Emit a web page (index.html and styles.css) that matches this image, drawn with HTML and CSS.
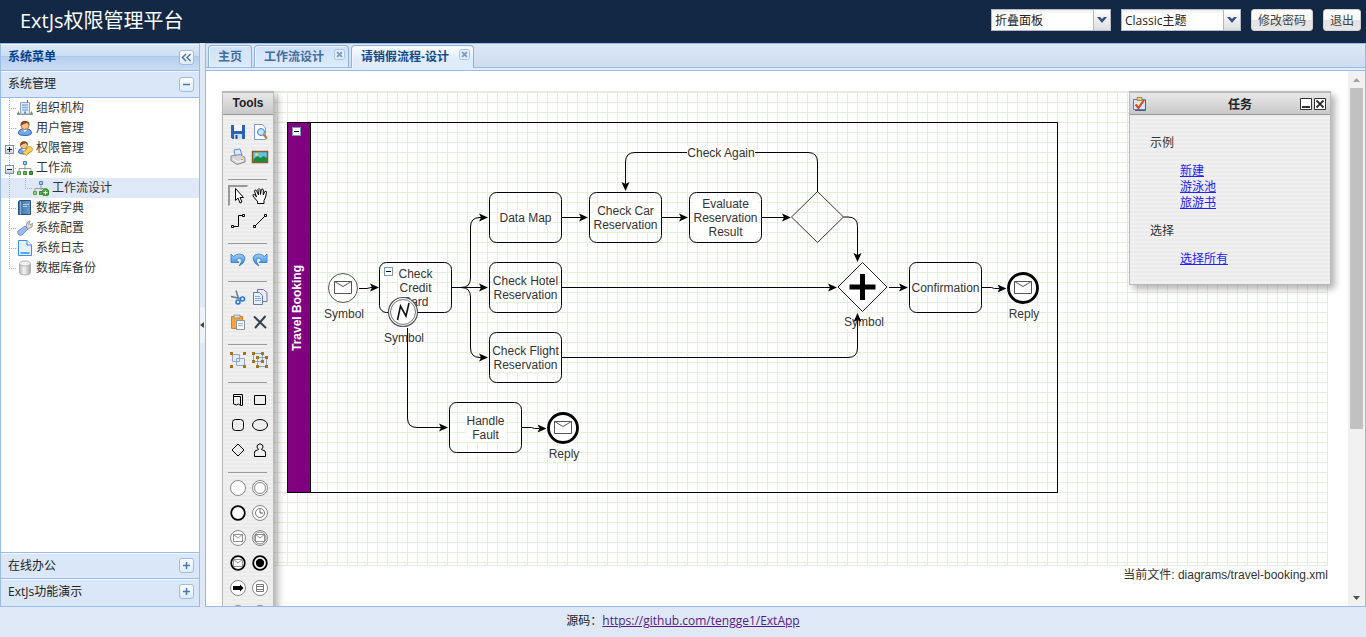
FILE: index.html
```html
<!DOCTYPE html>
<html lang="zh-CN">
<head>
<meta charset="utf-8">
<title>ExtJs权限管理平台</title>
<link rel="stylesheet" href="styles.css">
</head>
<body>
<svg class="defs" aria-hidden="true">
  <defs>
    <linearGradient id="gBlue" x1="0" y1="0" x2="0" y2="1"><stop offset="0" stop-color="#9fd0fb"/><stop offset="1" stop-color="#2f7fd6"/></linearGradient>
    <linearGradient id="gBook" x1="0" y1="0" x2="1" y2="0"><stop offset="0" stop-color="#3f70a4"/><stop offset="1" stop-color="#6c9cc8"/></linearGradient>
    <linearGradient id="gGrey" x1="0" y1="0" x2="1" y2="0"><stop offset="0" stop-color="#b5b5b5"/><stop offset=".4" stop-color="#f6f6f6"/><stop offset="1" stop-color="#a8a8a8"/></linearGradient>
    <symbol id="person" viewBox="0 0 16 16">
      <path d="M1.500 13.500Q1.500 9 6 9h4q4.500 0 4.500 4.500-1 2-6.500 2t-6.500-2z" fill="#6fa8ee" stroke="#2f62b5"/>
      <path d="M5.500 9.500L8 12l2.500-2.500" fill="#fff"/>
      <circle cx="8" cy="5.500" r="4" fill="#f5c08a" stroke="#a8682f" stroke-width=".8"/>
      <path d="M3.500 6Q3 1 8 .8q5 .2 4.500 5-1-2.600-3-2.800Q6 4 3.500 6z" fill="#8a4a1c"/>
    </symbol>
    <symbol id="chart" viewBox="0 0 16 16">
      <path d="M8 5v5M2 11V8.500h12V11" fill="none" stroke="#999"/>
      <path d="M6.500 1.500h3v3h-3z" fill="#a9cbf5" stroke="#4b80c8"/>
      <path d="M.5 11.500h3v3h-3z" fill="#8fd07a" stroke="#5da34e"/>
      <path d="M6.500 11.500h3v3h-3z" fill="#5fbf4c" stroke="#3b8d30"/>
      <path d="M12.500 11.500h3v3h-3z" fill="#3fa133" stroke="#2a7424"/>
    </symbol>
    <symbol id="mail" viewBox="0 0 20 20">
      <path d="M5.500 6.500h9v7h-9zM5.500 6.500L10 10l4.500-3.500" fill="none" stroke="#777" stroke-width=".8"/>
    </symbol>
    <symbol id="envelope" viewBox="0 0 18 13">
      <path d="M.5.5h17v12H.5zM.5.5L9 5.500 17.500.5" fill="none" stroke="#555"/>
    </symbol>
  </defs>
</svg>

<div class="app">
  <header class="top">
    <h1 class="brand">ExtJs权限管理平台</h1>
    <div class="combo">
      <select class="combo-box" aria-label="菜单样式"><option>折叠面板</option></select>
      <span class="combo-trigger"><svg width="10" height="6" viewBox="0 0 10 6"><path d="M0 0h3l2 2 2-2h3L5 6z" fill="#334f87"/></svg></span>
    </div>
    <div class="combo">
      <select class="combo-box" aria-label="主题"><option>Classic主题</option></select>
      <span class="combo-trigger"><svg width="10" height="6" viewBox="0 0 10 6"><path d="M0 0h3l2 2 2-2h3L5 6z" fill="#334f87"/></svg></span>
    </div>
    <button class="btn" type="button">修改密码</button>
    <button class="btn" type="button">退出</button>
  </header>

  <div class="body">
    <aside class="side">
      <div class="side-title">
        <span>系统菜单</span>
        <button class="tool" type="button" aria-label="收起"><svg width="13" height="13" viewBox="0 0 13 13"><path d="M6 3L2.500 6.500 6 10M10.500 3L7 6.500l3.500 3.500" fill="none" stroke="#4878b8" stroke-width="1.500"/></svg></button>
      </div>
      <div class="acc">
        <span>系统管理</span>
        <button class="tool" type="button" aria-label="折叠"><svg width="13" height="13" viewBox="0 0 13 13"><path d="M3 6.500h7" stroke="#4878b8" stroke-width="1.500"/></svg></button>
      </div>
      <ul class="tree">
        <li class="node"><i class="elbow"></i><svg class="ico" viewBox="0 0 16 16"><path d="M0 14.500h16" stroke="#8a8f98"/><path d="M3.500 2.500h9V14h-9z" fill="#dfe9f8" stroke="#98a5bb"/><path d="M5 5h6M5 7.500h6M5 10h6" stroke="#86aee6" stroke-width="1.500"/><path d="M7 11.500h2V14H7z" fill="#7f93b5"/><path d="M10.500 2.500V0" stroke="#e0403a"/><path d="M0 14l1.500-3L3 14zM13 14l1.500-3L16 14z" fill="#4aa94a"/></svg><span>组织机构</span></li>
        <li class="node"><i class="elbow"></i><svg class="ico"><use href="#person"/></svg><span>用户管理</span></li>
        <li class="node"><i class="elbow"><b class="pm plus"></b></i><svg class="ico" viewBox="0 0 16 16"><use href="#person" width="14" height="15"/><path d="M5.500 12.500l4-3 1-2.500 3-.5 2 2-.5 3-3 1-2.500 3z" fill="#fbd35c" stroke="#c98a1c" stroke-width=".8"/></svg><span>权限管理</span></li>
        <li class="node"><i class="elbow"><b class="pm"></b></i><svg class="ico"><use href="#chart"/></svg><span>工作流</span></li>
        <li class="node selected"><i class="elbow through"></i><i class="elbow end"></i><svg class="ico" viewBox="0 0 16 16"><use href="#chart"/><circle cx="12.500" cy="12.500" r="3.500" fill="#4fae3e" stroke="#2b7a22" stroke-width=".8"/><path d="M10.500 12.500h4M12.500 10.500v4" stroke="#fff"/></svg><span>工作流设计</span></li>
        <li class="node"><i class="elbow"></i><svg class="ico" viewBox="0 0 16 16"><path d="M1.500 1.500l1.500-1h10.500v14h-12z" fill="url(#gBook)" stroke="#24507e"/><path d="M3.500 1.500v13" stroke="#8fb4da"/><path d="M6 4.500h6M6 6.500h4" stroke="#b8d2ea"/></svg><span>数据字典</span></li>
        <li class="node"><i class="elbow"></i><svg class="ico" viewBox="0 0 16 16"><path d="M9 7L10 2.500 13 .8 12 4l2 .8L15.500 3 15 7l-3.500 1.500L10.500 10z" fill="#d8d8d8" stroke="#888" stroke-width=".8"/><path d="M8 6l3 3-6 6q-2 1-3.500-.5T1 11z" fill="#9cbcf0" stroke="#5a7fc0" stroke-width=".8"/></svg><span>系统配置</span></li>
        <li class="node"><i class="elbow"></i><svg class="ico" viewBox="0 0 16 16"><path d="M1.500.5H10L14.500 5v10.500h-13z" fill="#e3f1ff" stroke="#3f8ee0"/><path d="M10 .5V5h4.500" fill="#fff" stroke="#3f8ee0"/><path d="M3.500 13h9" stroke="#58a6ef" stroke-width="2"/></svg><span>系统日志</span></li>
        <li class="node"><i class="elbow end"></i><svg class="ico" viewBox="0 0 16 16"><path d="M2.500 3.500V13q1 2 5.500 2t5.500-2V3.500z" fill="url(#gGrey)" stroke="#b0b0b0"/><ellipse cx="8" cy="3.500" rx="5.500" ry="2.500" fill="#f2f2f2" stroke="#b4b4b4"/></svg><span>数据库备份</span></li>
      </ul>
      <div class="acc acc-low">
        <span>在线办公</span>
        <button class="tool" type="button" aria-label="展开"><svg width="13" height="13" viewBox="0 0 13 13"><path d="M3 6.500h7M6.500 3v7" stroke="#4878b8" stroke-width="1.500"/></svg></button>
      </div>
      <div class="acc acc-low acc-last">
        <span>ExtJs功能演示</span>
        <button class="tool" type="button" aria-label="展开"><svg width="13" height="13" viewBox="0 0 13 13"><path d="M3 6.500h7M6.500 3v7" stroke="#4878b8" stroke-width="1.500"/></svg></button>
      </div>
    </aside>

    <div class="splitter"><span class="grip"><svg width="4" height="6" viewBox="0 0 4 6"><path d="M4 0v6L0 3z" fill="#444"/></svg></span></div>

    <main class="main">
      <nav class="tabs">
        <button class="tab" type="button">主页</button>
        <button class="tab closable" type="button">工作流设计<svg class="close" viewBox="0 0 11 11"><rect x=".5" y=".5" width="10" height="10" rx="2" fill="#e6effb" stroke="#a9c4e8"/><path d="M3 3l5 5M8 3L3 8" stroke="#7f9fc9" stroke-width="1.800"/></svg></button>
        <button class="tab closable active" type="button">请销假流程-设计<svg class="close" viewBox="0 0 11 11"><rect x=".5" y=".5" width="10" height="10" rx="2" fill="#e6effb" stroke="#a9c4e8"/><path d="M3 3l5 5M8 3L3 8" stroke="#7f9fc9" stroke-width="1.800"/></svg></button>
      </nav>
      <div class="view">
        <div class="editor">
          <div class="stage">
            <div class="tag">Travel Booking</div>
            <div class="task data-map"><span>Data Map</span></div>
            <div class="task car"><span>Check Car<br>Reservation</span></div>
            <div class="task evaluate"><span>Evaluate<br>Reservation<br>Result</span></div>
            <div class="task credit"><span>Check<br>Credit<br>Card</span></div>
            <div class="task hotel"><span>Check Hotel<br>Reservation</span></div>
            <div class="task flight"><span>Check Flight<br>Reservation</span></div>
            <div class="task handle"><span>Handle<br>Fault</span></div>
            <div class="task confirm"><span>Confirmation</span></div>
            <div class="caption cap-start"><span>Symbol</span></div>
            <div class="caption cap-error"><span>Symbol</span></div>
            <div class="caption cap-join"><span>Symbol</span></div>
            <div class="caption cap-reply"><span>Reply</span></div>
            <div class="caption cap-fault"><span>Reply</span></div>

            <svg class="wires" width="1106" height="475" viewBox="222 91 1106 475">
              <defs>
                <marker id="arr" markerUnits="userSpaceOnUse" markerWidth="9" markerHeight="9" refX="2" refY="4.500" orient="auto"><path d="M0 .5L9 4.500 0 8.500 2 4.500z"/></marker>
              </defs>
              <g fill="none" stroke="#000">
                <rect x="287.500" y="122.500" width="770" height="370"/>
                <path d="M310.500 122.500v370"/>
                <rect x="489.500" y="192.500" width="72" height="50" rx="7"/>
                <rect x="589.500" y="192.500" width="72" height="50" rx="7"/>
                <rect x="689.500" y="192.500" width="72" height="50" rx="7"/>
                <rect x="379.500" y="262.500" width="72" height="50" rx="7"/>
                <rect x="489.500" y="262.500" width="72" height="50" rx="7"/>
                <rect x="489.500" y="332.500" width="72" height="50" rx="7"/>
                <rect x="449.500" y="402.500" width="72" height="50" rx="7"/>
                <rect x="909.500" y="262.500" width="72" height="50" rx="7"/>
                <path d="M817.500 191.500l26 25.500-26 25.500-26-25.500z" stroke-width=".8"/>
              </g>
              <path d="M862.500 262.500l24.500 24.500-24.500 24.500-24.500-24.500z" fill="#fff" stroke="#222"/>
              <path d="M862.500 274v26M849.500 287h26" stroke="#000" stroke-width="5"/>
              <circle cx="343" cy="288" r="14.500" fill="#fff" stroke="#555"/>
              <use href="#envelope" x="334" y="281" width="18" height="13"/>
              <circle cx="403" cy="312" r="14.500" fill="#fff" stroke="#555" stroke-width="1.200"/>
              <circle cx="403" cy="312" r="12.500" fill="none" stroke="#777"/>
              <path d="M397.500 320l3-14 5.500 10 3-13" fill="none" stroke="#111" stroke-width="1.600"/>
              <circle cx="1023" cy="288" r="14.500" fill="#fff" stroke="#000" stroke-width="2.800"/>
              <use href="#envelope" x="1014" y="281" width="18" height="13"/>
              <circle cx="563" cy="428" r="14.500" fill="#fff" stroke="#000" stroke-width="2.800"/>
              <use href="#envelope" x="554" y="421" width="18" height="13"/>
              <g class="edges" fill="none" stroke="#000">
                <path d="M359 288.500h8l4-1h1"/>
                <path d="M451.500 287.500H481"/>
                <path d="M451.500 287.500H461q9.500 0 9.500-9.500v-51q0-9.500 9.500-9.500h1"/>
                <path d="M451.500 287.500H461q9.500 0 9.500 9.500v51q0 9.500 9.500 9.500h1"/>
                <path d="M561.500 217.500H581"/>
                <path d="M661.500 217.500H681"/>
                <path d="M761.500 217.500H784"/>
                <path d="M817.500 192v-30q0-9.500-9.500-9.500H635q-9.500 0-9.500 9.500v22"/>
                <path d="M843.500 217H848q9.500 0 9.500 9.500V255"/>
                <path d="M561.500 287.500H830"/>
                <path d="M561.500 357.500H848q9.500 0 9.500-9.500V320"/>
                <path d="M889 287.500H901"/>
                <path d="M981.500 287.500h10l3 1h5"/>
                <path d="M407.500 328v90q0 9.500 9.500 9.500h24"/>
                <path d="M521.500 427.500h10l3 1h5"/>
              </g>
              <g fill="#fff" stroke="#7b97b8">
                <rect x="292.500" y="127.500" width="8" height="8"/>
                <rect x="384.500" y="267.500" width="8" height="8"/>
                <path d="M294 131.500h5M386 271.500h5" stroke="#000"/>
              </g>
            </svg>
            <div class="caption cap-again"><span>Check Again</span></div>

            <section class="win tools">
              <h2 class="win-title">Tools</h2>
              <div class="win-body">
                <div class="group">
                  <button type="button" aria-label="保存"><svg viewBox="0 0 20 20"><path d="M3 3h14v14H4.500L3 15.500z" fill="#2b62b8"/><path d="M6 3h8v6H6z" fill="#f4f8ff"/><path d="M6 12h8v5H6z" fill="#cfe0f5"/><path d="M7.500 13h2v4h-2z" fill="#234f95"/></svg></button>
                  <button type="button" aria-label="预览"><svg viewBox="0 0 20 20"><path d="M4.500 2.500h8L15.500 6v11.500h-11z" fill="#fff" stroke="#7e9ccb"/><circle cx="11" cy="10" r="3.500" fill="#bfe3fa" stroke="#4b86bd"/><path d="M13.500 12.500l3.500 4" stroke="#c07b35" stroke-width="2"/></svg></button>
                  <button type="button" aria-label="打印"><svg viewBox="0 0 20 20"><path d="M6 3l6-1 2 6-7 1z" fill="#dceaff" stroke="#5d8fd0"/><path d="M3 9l9-1.500 5 3V15l-8 2.500-6-4z" fill="#d5d5d8" stroke="#8b8b90"/><path d="M5 12l5 3 5-1.500" fill="none" stroke="#fff"/><path d="M13 12.500h2" stroke="#e0a030"/></svg></button>
                  <button type="button" aria-label="导出图片"><svg viewBox="0 0 20 20"><path d="M2.500 4.500h15v11h-15z" fill="#5dc3e8" stroke="#8a5a2b" stroke-width="1.500"/><path d="M3.500 15v-3l4-3 3 2 3-2 3.500 2v4z" fill="#218838"/><circle cx="6.500" cy="7.500" r="1.500" fill="#ffd94a"/></svg></button>
                </div>
                <div class="group modes">
                  <button type="button" class="pressed" aria-label="选择"><svg viewBox="0 0 20 20"><path d="M6.500 2.500v12l2.500-2.500 2 5 2-1-2-4.500h3.500z" fill="#fff" stroke="#000"/></svg></button>
                  <button type="button" aria-label="平移"><svg viewBox="0 0 20 20"><path d="M7.500 17.500v-2L3 10Q2.500 8 4.500 8.500L6.500 11 4.500 5q.5-2 2-.5l2 4.500-.5-5.500q1-2 2 0l.5 5 .8-5q1.500-1.500 2 .5v5l1.500-3.500q1.800-1 1.700 1-.5 5-2.500 8v3z" fill="#fff" stroke="#000"/></svg></button>
                  <button type="button" aria-label="折线"><svg viewBox="0 0 20 20"><path d="M5 15.500h5.500v-11H15" fill="none" stroke="#000"/><path d="M3.500 14.500h2v2h-2zM14.500 3.500h2v2h-2z" fill="#fff" stroke="#000"/></svg></button>
                  <button type="button" aria-label="直线"><svg viewBox="0 0 20 20"><path d="M5 15L15 5" stroke="#000"/><path d="M3.500 14.500h2v2h-2zM14.500 3.500h2v2h-2z" fill="#fff" stroke="#000"/></svg></button>
                </div>
                <div class="group">
                  <button type="button" aria-label="撤销"><svg viewBox="0 0 20 20"><path d="M3 5v8.500h8L8.500 11q2.500-3 4.500-1.500 2 3-2 7.500 6-3 6-8-1-4-5.500-4Q8 5 5.500 7.500z" fill="url(#gBlue)" stroke="#2b78c8" stroke-width=".8"/></svg></button>
                  <button type="button" aria-label="重做"><svg viewBox="0 0 20 20"><path d="M17 5v8.500H9l2.500-2.500Q9 8 7 9.500q-2 3 2 7.500-6-3-6-8 1-4 5.500-4Q12 5 14.500 7.500z" fill="url(#gBlue)" stroke="#2b78c8" stroke-width=".8"/></svg></button>
                </div>
                <div class="group">
                  <button type="button" aria-label="剪切"><svg viewBox="0 0 20 20"><path d="M8 3.500l2.500 8M3 9.500l9 2" stroke="#66798f" stroke-width="1.500"/><circle cx="14.500" cy="12" r="2" fill="none" stroke="#2b74d0" stroke-width="1.500"/><circle cx="10" cy="15" r="2" fill="none" stroke="#2b74d0" stroke-width="1.500"/></svg></button>
                  <button type="button" aria-label="复制"><svg viewBox="0 0 20 20"><path d="M7.500 2.500h6l3.500 3v9H7.500z" fill="#efeafa" stroke="#7a6db0"/><path d="M3.500 5.500h6l3 3v9h-9z" fill="#e4f0ff" stroke="#6478b0"/><path d="M5 9.500h5M5 11.500h6M5 13.500h6" stroke="#8aa8d8"/></svg></button>
                  <button type="button" aria-label="粘贴"><svg viewBox="0 0 20 20"><path d="M3.500 4.500h11v12h-11z" fill="#f7a53b" stroke="#d9801c"/><path d="M6 3h6v3H6z" fill="#ddd" stroke="#888" stroke-width=".8"/><path d="M8.500 8.500h8v9h-8z" fill="#f5f7fa" stroke="#8b95a5"/><path d="M10 11.500h5M10 13.500h5" stroke="#b0b8c8"/></svg></button>
                  <button type="button" aria-label="删除"><svg viewBox="0 0 20 20"><path d="M4 4.500l12 11.500M15.500 4L5 16" stroke="#39424e" stroke-width="2"/></svg></button>
                </div>
                <div class="group">
                  <button type="button" aria-label="组合"><svg viewBox="0 0 20 20"><path d="M4.500 4.500h7v7h-7zM8.500 8.500h8v7h-8z" fill="#e3ecf8" stroke="#91a6c4"/><path d="M2 2h3v3H2zM15 2h3v3h-3zM2 15h3v3H2zM15 15h3v3h-3z" fill="#a5731a"/></svg></button>
                  <button type="button" aria-label="取消组合"><svg viewBox="0 0 20 20"><path d="M3.500 3.500h9v8h-9zM7.500 7.500h9v9h-9z" fill="#e3ecf8" stroke="#91a6c4"/><path d="M2 2h3v3H2zM11 2h3v3h-3zM2 10h3v3H2zM6 6h3v3H6zM15 6h3v3h-3zM6 15h3v3H6zM15 15h3v3h-3zM11 10h3v3h-3z" fill="#a5731a"/></svg></button>
                </div>
                <div class="group shapes">
                  <button type="button" aria-label="容器"><svg viewBox="0 0 20 20"><path d="M5.500 4.500h9v11h-2l-2-1.500-2 1-3-1zM5.500 6.500h7v9" fill="none" stroke="#000"/></svg></button>
                  <button type="button" aria-label="矩形"><svg viewBox="0 0 20 20"><path d="M4.500 5.500h11v9h-11z" fill="none" stroke="#000"/></svg></button>
                  <button type="button" aria-label="圆角矩形"><svg viewBox="0 0 20 20"><rect x="4.500" y="4.500" width="11" height="11" rx="3" fill="none" stroke="#000"/></svg></button>
                  <button type="button" aria-label="椭圆"><svg viewBox="0 0 20 20"><ellipse cx="10" cy="10" rx="7.500" ry="5.500" fill="none" stroke="#000"/></svg></button>
                  <button type="button" aria-label="菱形"><svg viewBox="0 0 20 20"><path d="M10 4l6 6-6 6-6-6z" fill="none" stroke="#000"/></svg></button>
                  <button type="button" aria-label="角色"><svg viewBox="0 0 20 20"><path d="M8.500 9.500Q6 7 7.500 5q2.500-2.500 5 0 1.500 2-1 4.500l3.500 1.500q1 3 .5 5.500h-11q-.500-3 .5-5.500z" fill="none" stroke="#000"/></svg></button>
                </div>
                <div class="group">
                  <button type="button" aria-label="开始事件"><svg viewBox="0 0 20 20"><circle cx="10" cy="10" r="7.500" fill="#fff" stroke="#888"/></svg></button>
                  <button type="button" aria-label="中间事件"><svg viewBox="0 0 20 20"><circle cx="10" cy="10" r="7.500" fill="#fff" stroke="#888"/><circle cx="10" cy="10" r="5.500" fill="none" stroke="#888"/></svg></button>
                  <button type="button" aria-label="结束事件"><svg viewBox="0 0 20 20"><circle cx="10" cy="10" r="6.800" fill="#fff" stroke="#000" stroke-width="1.800"/></svg></button>
                  <button type="button" aria-label="定时"><svg viewBox="0 0 20 20"><circle cx="10" cy="10" r="7.500" fill="#fff" stroke="#888"/><circle cx="10" cy="10" r="4.500" fill="none" stroke="#777"/><path d="M10 6.500V10h3" fill="none" stroke="#666"/></svg></button>
                  <button type="button" aria-label="消息"><svg viewBox="0 0 20 20"><circle cx="10" cy="10" r="7.500" fill="#fff" stroke="#888"/><use href="#mail"/></svg></button>
                  <button type="button" aria-label="中间消息"><svg viewBox="0 0 20 20"><circle cx="10" cy="10" r="7.500" fill="#fff" stroke="#888"/><circle cx="10" cy="10" r="6" fill="none" stroke="#888"/><use href="#mail"/></svg></button>
                  <button type="button" aria-label="结束消息"><svg viewBox="0 0 20 20"><circle cx="10" cy="10" r="6.800" fill="#fff" stroke="#000" stroke-width="1.800"/><use href="#mail"/></svg></button>
                  <button type="button" aria-label="终止"><svg viewBox="0 0 20 20"><circle cx="10" cy="10" r="6.800" fill="#fff" stroke="#000" stroke-width="1.800"/><circle cx="10" cy="10" r="4.200"/></svg></button>
                  <button type="button" aria-label="链接"><svg viewBox="0 0 20 20"><circle cx="10" cy="10" r="7.500" fill="#fff" stroke="#888"/><path d="M5 8h7V6.500l3.500 3.500-3.500 3.500V12H5z"/></svg></button>
                  <button type="button" aria-label="规则"><svg viewBox="0 0 20 20"><circle cx="10" cy="10" r="7.500" fill="#fff" stroke="#888"/><path d="M6.500 6.500h7v7h-7zM6.500 8.500h7M6.500 11.500h7" fill="none" stroke="#777"/></svg></button>
                  <button type="button" aria-label="错误"><svg viewBox="0 0 20 20"><circle cx="10" cy="10" r="7.500" fill="#fff" stroke="#888"/></svg></button>
                  <button type="button" aria-label="取消"><svg viewBox="0 0 20 20"><circle cx="10" cy="10" r="7.500" fill="#fff" stroke="#888"/></svg></button>
                </div>
              </div>
            </section>

            <section class="win tasks">
              <div class="win-title">
                <svg width="16" height="16" viewBox="0 0 16 16"><path d="M1.500 3.500h12v10h-12z" fill="#dce9fb" stroke="#5b7fb5"/><path d="M13.500 4v10.500H3" fill="none" stroke="#3f5f95"/><path d="M5 1.500h5v3H5z" fill="#e8cd6a" stroke="#9a7c25" stroke-width=".8"/><path d="M3.500 8.500l3 3.500 5.500-8" fill="none" stroke="#e2491d" stroke-width="2.200"/></svg>
                <h2>任务</h2>
                <button type="button" aria-label="最小化"><svg width="12" height="12" viewBox="0 0 12 12"><path d="M.5.5h11v11H.5z" fill="#fff" stroke="#333"/><path d="M2 9h8" stroke="#333" stroke-width="2"/></svg></button>
                <button type="button" aria-label="关闭"><svg width="12" height="12" viewBox="0 0 12 12"><path d="M.5.5h11v11H.5z" fill="#fff" stroke="#333"/><path d="M2.500 2.500l7 7M9.500 2.500l-7 7" stroke="#333" stroke-width="2"/></svg></button>
              </div>
              <div class="win-body">
                <p>示例</p>
                <ul>
                  <li><a href="#">新建</a></li>
                  <li><a href="#">游泳池</a></li>
                  <li><a href="#">旅游书</a></li>
                </ul>
                <p>选择</p>
                <ul>
                  <li><a href="#">选择所有</a></li>
                </ul>
              </div>
            </section>
          </div>
          <p class="status">当前文件: diagrams/travel-booking.xml</p>
        </div>
        <div class="scroll">
          <svg width="17" height="17" viewBox="0 0 17 17"><path d="M5 11h7L8.500 7z" fill="#a3a3a3"/></svg>
          <span class="track"><span class="thumb"></span></span>
          <svg width="17" height="17" viewBox="0 0 17 17"><path d="M5 7h7l-3.500 4z" fill="#505050"/></svg>
        </div>
      </div>
    </main>
  </div>

  <footer class="foot">源码：<a href="#">https://github.com/tengge1/ExtApp</a></footer>
</div>
</body>
</html>
```

FILE: styles.css
```css
* { box-sizing: border-box; }
body, h1, h2, p, ul { margin: 0; padding: 0; }
ul { list-style: none; }
button { font: inherit; margin: 0; padding: 0; border: 0; background: none; }
svg { display: block; flex: none; }
.defs { position: absolute; width: 0; height: 0; }

body {
  font: 12px/16px "Open Sans", "Noto Sans CJK SC", sans-serif;
  color: #222;
  background: #dfe8f6;
}
.app { display: flex; flex-direction: column; height: 100vh; overflow: hidden; }

/* header */
.top {
  display: flex;
  align-items: center;
  gap: 10px;
  height: 43px;
  padding: 0 5px 3px 20px;
  background: #132845;
  flex: none;
}
.brand { flex: 1; padding-top: 2px; font-size: 20px; line-height: 28px; font-weight: 400; color: #fff; }
.combo { display: flex; width: 120px; height: 22px; border: 1px solid #b5b8c8; background: #fff; }
.combo-box {
  flex: 1;
  min-width: 0;
  appearance: none;
  border: 0;
  padding: 2px 3px 0;
  font: inherit;
  color: #222;
  background: linear-gradient(#eee, #fff 4px);
}
.combo-trigger {
  display: flex;
  width: 17px;
  padding: 7px 0 0 3px;
  border-left: 1px solid #b5b8c8;
  background: linear-gradient(#fff, #ddd);
}
.btn {
  height: 22px;
  padding: 1px 6px 0;
  border: 1px solid #d1d1d1;
  border-radius: 3px;
  color: #444;
  background: linear-gradient(#fff, #f9f9f9 48%, #e2e2e2 52%, #e7e7e7);
}

/* frame */
.body { display: flex; flex: 1; min-height: 0; }
.side { display: flex; flex-direction: column; width: 200px; border: 1px solid #99bbe8; background: #fff; flex: none; }
.side-title, .acc {
  display: flex;
  align-items: center;
  justify-content: space-between;
  height: 27px;
  padding: 0 5px 0 7px;
  border-bottom: 1px solid #99bbe8;
  flex: none;
}
.side-title {
  font-weight: 700;
  color: #04408c;
  background: linear-gradient(#dae7f6, #cddef3 45%, #abc7ec 46%, #b8cfee 52%, #cbddf3);
  box-shadow: inset 0 1px #f0f6fd;
}
.acc { background: #d9e7f8; box-shadow: inset 0 1px #f3f7fb; color: #222; }
.acc-low { height: 26px; border-top: 1px solid #99bbe8; border-bottom: 0; }
.acc-last { height: 28px; padding-bottom: 2px; }
.tool {
  display: flex;
  width: 15px;
  height: 15px;
  border: 1px solid #9dbbe3;
  border-radius: 3px;
  background: linear-gradient(#fff, #dcecfc);
}
.tree { flex: 1; color: #333; }
.node { display: flex; align-items: center; height: 20px; }
.node span { padding-left: 3px; }
.selected { background: #dfe8f6; }
.ico { width: 16px; height: 16px; }
.elbow {
  display: flex;
  align-items: center;
  width: 16px;
  height: 20px;
  padding: 2px 0 0 4px;
  background:
    repeating-linear-gradient(#b0b0b0 0 1px, transparent 1px 2px) 8px 0 / 1px 20px no-repeat,
    repeating-linear-gradient(90deg, #b0b0b0 0 1px, transparent 1px 2px) 8px 10px / 7px 1px no-repeat;
}
.through { background: repeating-linear-gradient(#b0b0b0 0 1px, transparent 1px 2px) 8px 0 / 1px 20px no-repeat; }
.end {
  background:
    repeating-linear-gradient(#b0b0b0 0 1px, transparent 1px 2px) 8px 0 / 1px 10px no-repeat,
    repeating-linear-gradient(90deg, #b0b0b0 0 1px, transparent 1px 2px) 8px 10px / 7px 1px no-repeat;
}
.pm {
  width: 9px;
  height: 9px;
  border: 1px solid #7b93b5;
  background: linear-gradient(#222, #222) 1px 3px / 5px 1px no-repeat, linear-gradient(#fff, #c5d0e0);
}
.plus {
  background:
    linear-gradient(#222, #222) 1px 3px / 5px 1px no-repeat,
    linear-gradient(#222, #222) 3px 1px / 1px 5px no-repeat,
    linear-gradient(#fff, #c5d0e0);
}
.splitter { display: flex; align-items: center; width: 5px; flex: none; }
.grip {
  display: flex;
  align-items: center;
  width: 5px;
  height: 36px;
  border-radius: 2px;
  background: #eef3fa;
}
.foot { height: 30px; padding-top: 6px; text-align: center; flex: none; }
.foot a { color: #551a8b; }

/* tabs */
.main { display: flex; flex-direction: column; flex: 1; min-width: 0; border: 1px solid #99bbe8; background: #fff; }
.tabs {
  display: flex;
  align-items: flex-end;
  gap: 2px;
  height: 27px;
  padding: 0 2px 2px;
  border-bottom: 1px solid #99bbe8;
  background: linear-gradient(#deecfd, #deecfd) 0 24px / 100% 2px no-repeat, linear-gradient(#99bbe8, #99bbe8) 0 23px / 100% 1px no-repeat, linear-gradient(#dde8f5, #cbdbef);
  flex: none;
}
.tab {
  display: flex;
  height: 22px;
  margin-bottom: 1px;
  padding: 3px 9px;
  border: 1px solid #8db3e3;
  border-bottom: 0;
  border-radius: 4px 4px 0 0;
  font-weight: 700;
  color: #416da3;
  background: linear-gradient(#cfe0f7, #deebfd);
  box-shadow: inset 1px 1px #eef5ff;
}
.closable { gap: 10px; padding-right: 3px; }
.close { width: 11px; height: 11px; }
.active { height: 23px; margin-bottom: 0; color: #15498b; background: linear-gradient(#fff, #deecfd 60%); }

/* editor */
.view { display: flex; flex: 1; min-height: 0; }
.editor {
  flex: 1;
  min-width: 0;
  padding: 20px 20px 0 16px;
  overflow: hidden;
  font-family: "Liberation Sans", "Noto Sans CJK SC", sans-serif;
  color: #333;
}
.stage {
  position: relative;
  height: 475px;
  border-top: 1px solid #e6e9e2;
  border-bottom: 1px solid #e8e8e8;
  background:
    linear-gradient(#e6efda 1px, transparent 1px) 5px 0 / 10px 10px,
    linear-gradient(90deg, #e6efda 1px, transparent 1px) 5px 0 / 10px 10px;
}
.wires { position: absolute; left: 0; top: -1px; }
.edges path { marker-end: url(#arr); }
.status { padding-top: 1px; text-align: right; }
.task {
  position: absolute;
  display: flex;
  align-items: center;
  justify-content: center;
  width: 73px;
  height: 51px;
  line-height: 14px;
  text-align: center;
}
.task span, .caption span { background: #fff; }
.caption { position: absolute; display: flex; justify-content: center; width: 80px; line-height: 14px; }
.data-map { left: 267px; top: 100px; }
.car { left: 367px; top: 100px; }
.evaluate { left: 467px; top: 100px; }
.credit { left: 157px; top: 170px; }
.hotel { left: 267px; top: 170px; }
.flight { left: 267px; top: 240px; }
.handle { left: 227px; top: 310px; }
.confirm { left: 687px; top: 170px; }
.cap-start { left: 82px; top: 215px; }
.cap-error { left: 142px; top: 239px; }
.cap-join { left: 602px; top: 223px; }
.cap-reply { left: 762px; top: 215px; }
.cap-fault { left: 302px; top: 355px; }
.cap-again { left: 459px; top: 54px; }
.tag {
  position: absolute;
  left: 65px;
  top: 30px;
  width: 24px;
  height: 371px;
  padding-left: 4px;
  line-height: 20px;
  text-align: center;
  font-weight: 700;
  color: #fff;
  background: #800080;
  writing-mode: vertical-rl;
  transform: rotate(180deg);
}

/* floating windows */
.win {
  position: absolute;
  top: -1px;
  border: 1px solid #bbb;
  border-top-width: 2px;
  background: repeating-linear-gradient(#f0f0f0 0 2px, #ebebeb 2px 4px);
  box-shadow: 4px 4px 7px rgba(0, 0, 0, .3);
}
.win-title { height: 22px; border-bottom: 1px solid #999; background: linear-gradient(#e8e8e8, #c8c8c8); color: #222; font-weight: 700; }
.tools { left: 0; width: 52px; height: 600px; }
.tools .win-title { font-size: 12px; line-height: 20px; text-align: center; }
.tools .win-body { padding: 4px 2px 4px 4px; }
.group { display: grid; grid-template-columns: 22px 22px; position: relative; }
.group button { display: flex; align-items: center; justify-content: center; height: 25px; }
.group svg { width: 20px; height: 20px; }
.group + .group { margin-top: 10px; padding-top: 3px; }
.group + .group::before {
  content: "";
  position: absolute;
  left: 1px;
  top: 0;
  width: 39px;
  height: 1px;
  background: #999;
}
.group + .modes { padding-top: 4px; }
.group + .shapes { padding-top: 5px; }
.group .pressed { height: 21px; margin: 2px 1px; border: 1px solid transparent; border-top: 2px solid #999; border-left: 2px solid #999; }
.tasks { right: -3px; width: 202px; height: 194px; }
.tasks .win-title { display: flex; align-items: center; gap: 2px; padding: 0 4px 0 2px; }
.tasks h2 { flex: 1; padding: 2px 0 0 32px; font-size: 12px; line-height: 16px; text-align: center; }
.tasks .win-body { padding: 20px; }
.tasks p { line-height: 16px; }
.tasks ul { padding: 12px 0 12px 30px; }
.tasks a { color: #22f; }

/* scroll bar */
.scroll { display: flex; flex-direction: column; width: 17px; background: #f1f1f1; flex: none; }
.track { flex: 1; padding: 0 2px; }
.thumb { display: block; height: 68%; background: #c1c1c1; }
```
